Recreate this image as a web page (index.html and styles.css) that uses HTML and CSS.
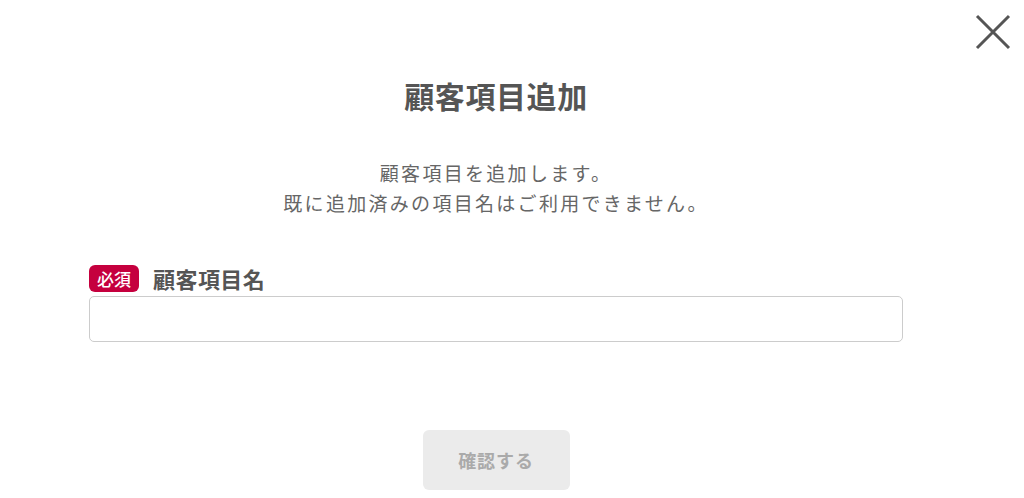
FILE: index.html
```html
<!DOCTYPE html>
<html lang="ja">

<head>
    <meta charset="UTF-8">
    <title>顧客項目追加</title>
    <link rel="stylesheet" href="styles.css">
</head>

<body>
    <div class="modal">
        <button class="close" type="button" aria-label="閉じる">
            <svg width="36" height="36" viewBox="0 0 36 36">
                <path d="M2 2 L34 34 M34 2 L2 34" stroke="#555" stroke-width="3" fill="none" />
            </svg>
        </button>
        <h1 class="title">顧客項目追加</h1>
        <p class="desc">顧客項目を追加します。<br>既に追加済みの項目名はご利用できません。</p>
        <div class="field">
            <div class="field-label">
                <span class="badge">必須</span>
                <span class="label-text">顧客項目名</span>
            </div>
            <input class="text-input" type="text">
        </div>
        <div class="actions">
            <button class="submit" type="button" disabled>確認する</button>
        </div>
    </div>
</body>

</html>
```

FILE: styles.css
```css
* {
    margin: 0;
    padding: 0;
    box-sizing: border-box;
}

body {
    background: #fff;
    color: #555;
    font-family: "Noto Sans CJK JP", "Noto Sans", sans-serif;
}

.modal {
    position: relative;
    width: 1024px;
    height: 498px;
    padding: 75px 121px 0 89px;
}

.close {
    position: absolute;
    top: 14px;
    right: 13px;
    width: 36px;
    height: 36px;
    border: none;
    background: none;
    cursor: pointer;
}

.close svg {
    display: block;
}

.title {
    font-size: 30px;
    line-height: 40px;
    font-weight: bold;
    letter-spacing: 0.02em;
    text-align: center;
    color: #555;
}

.desc {
    margin-top: 43px;
    font-size: 19px;
    line-height: 30px;
    letter-spacing: 2.3px;
    text-align: center;
    color: #666;
}

.field {
    margin-top: 46px;
}

.field-label {
    display: flex;
    align-items: center;
    gap: 14px;
    height: 28px;
}

.badge {
    display: inline-block;
    width: 50px;
    height: 27px;
    line-height: 27px;
    border-radius: 6px;
    background: #c5003e;
    color: #fff;
    font-size: 17px;
    font-weight: 500;
    text-align: center;
}

.label-text {
    font-size: 22px;
    font-weight: bold;
    letter-spacing: 0.02em;
    color: #555;
}

.text-input {
    display: block;
    width: 100%;
    height: 46px;
    margin-top: 4px;
    border: 1px solid #ccc;
    border-radius: 5px;
    padding: 0 12px;
    font-size: 16px;
}

.actions {
    display: flex;
    justify-content: center;
    margin-top: 88px;
}

.submit {
    width: 147px;
    height: 60px;
    border: none;
    border-radius: 6px;
    background: #ebebeb;
    color: #aaa;
    font-family: inherit;
    font-size: 18px;
    font-weight: bold;
    letter-spacing: 0.05em;
}
```
